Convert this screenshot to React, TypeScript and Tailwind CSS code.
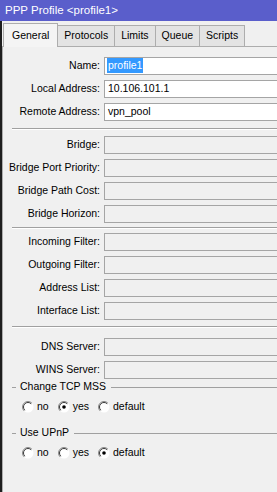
import React from "react";

const font = { fontFamily: "'Liberation Sans', Arial, sans-serif" };

function Field({ label, value, active, selected }: { label: string; value?: string; active?: boolean; selected?: boolean }) {
  return (
    <div className="flex items-center h-[23px]">
      <div className="w-[101px] shrink-0 text-right pr-[4px] text-[10.5px] text-black whitespace-nowrap">{label}</div>
      <div
        className={
          "flex-1 h-[18px] border border-[#a5a5a5] flex items-center pl-[2px] text-[10.5px] " +
          (active ? "bg-white" : "bg-[#f0f0f0]")
        }
      >
        {value &&
          (selected ? (
            <span className="bg-[#3399ff] text-white px-[1px] leading-[15px]">{value}</span>
          ) : (
            <span className="px-[1px] leading-[15px]">{value}</span>
          ))}
      </div>
    </div>
  );
}

function Sep({ top, bottom }: { top: string; bottom: string }) {
  return (
    <div className={"ml-[9px] " + top + " " + bottom}>
      <div className="h-px bg-[#a0a0a0]" />
      <div className="h-px bg-white" />
    </div>
  );
}

function Radio({ checked }: { checked?: boolean }) {
  return (
    <svg width="12" height="12" viewBox="0 0 12 12" className="shrink-0">
      <circle cx="6" cy="6" r="5.5" fill="#ffffff" />
      <path d="M2.1 9.9 A5.5 5.5 0 0 1 9.9 2.1" fill="none" stroke="#8a8a8a" strokeWidth="1" />
      <path d="M2.8 9.2 A4.5 4.5 0 0 1 9.2 2.8" fill="none" stroke="#3a3a3a" strokeWidth="1" />
      {checked && <circle cx="6" cy="6" r="1.8" fill="#000000" />}
    </svg>
  );
}

function RadioGroup({ title, value, top }: { title: string; value: string; top: string }) {
  return (
    <div className={top}>
      <div className="flex items-center h-[14px] ml-[9px] text-[10.5px]">
        <span className="w-[4px] h-px bg-[#a0a0a0] mr-[4px]" />
        <span className="whitespace-nowrap">{title}</span>
        <span className="flex-1 h-px bg-[#a0a0a0] ml-[5px]" />
      </div>
      <div className="flex items-center h-[14px] mt-[6px] pl-[19px] gap-[9px] text-[10.5px]">
        {["no", "yes", "default"].map((o) => (
          <div key={o} className="flex items-center gap-[3px]">
            <Radio checked={o === value} />
            <span>{o}</span>
          </div>
        ))}
      </div>
    </div>
  );
}

export default function App() {
  return (
    <div className="w-[277px] h-[492px] overflow-hidden bg-[#f0f0f0]" style={font}>
      <div className="w-[292px] h-full flex flex-col">
        {/* title bar */}
        <div className="h-[21px] shrink-0 bg-[#5a5ecb] text-white text-[11.5px] pl-[5px] flex items-center">
          PPP Profile &lt;profile1&gt;
        </div>

        <div className="flex flex-1 min-h-0">
          <div className="w-[2px] bg-[#1e1e1e] shrink-0" />
          <div className="flex-1 flex flex-col min-w-0">
            {/* tabs */}
            <div className="flex items-end h-[25px] pl-[1px] shrink-0">
              <div className="h-[24px] px-[8px] flex items-center bg-[#f4f4f4] border border-b-0 border-[#adadad] text-[10.5px] relative top-px z-10">
                General
              </div>
              {["Protocols", "Limits", "Queue", "Scripts"].map((t) => (
                <div
                  key={t}
                  className="h-[21px] px-[6px] flex items-center bg-[#e3e3e3] border border-l-0 border-b-0 border-[#adadad] text-[10.5px]"
                >
                  {t}
                </div>
              ))}
            </div>

            {/* panel */}
            <div className="flex-1 border-t border-l border-[#adadad] bg-[#f0f0f0] pt-[7px]">
              <Field label="Name:" value="profile1" active selected />
              <Field label="Local Address:" value="10.106.101.1" active />
              <Field label="Remote Address:" value="vpn_pool" active />
              <Sep top="mt-[5px]" bottom="mb-[3px]" />
              <Field label="Bridge:" />
              <Field label="Bridge Port Priority:" />
              <Field label="Bridge Path Cost:" />
              <Field label="Bridge Horizon:" />
              <Sep top="mt-[2px]" bottom="mb-[1px]" />
              <Field label="Incoming Filter:" />
              <Field label="Outgoing Filter:" />
              <Field label="Address List:" />
              <Field label="Interface List:" />
              <Sep top="mt-[4px]" bottom="mb-[7px]" />
              <Field label="DNS Server:" />
              <Field label="WINS Server:" />
              <RadioGroup title="Change TCP MSS" value="yes" top="mt-[-1px]" />
              <RadioGroup title="Use UPnP" value="default" top="mt-[12px]" />
            </div>
          </div>
        </div>
      </div>
    </div>
  );
}
